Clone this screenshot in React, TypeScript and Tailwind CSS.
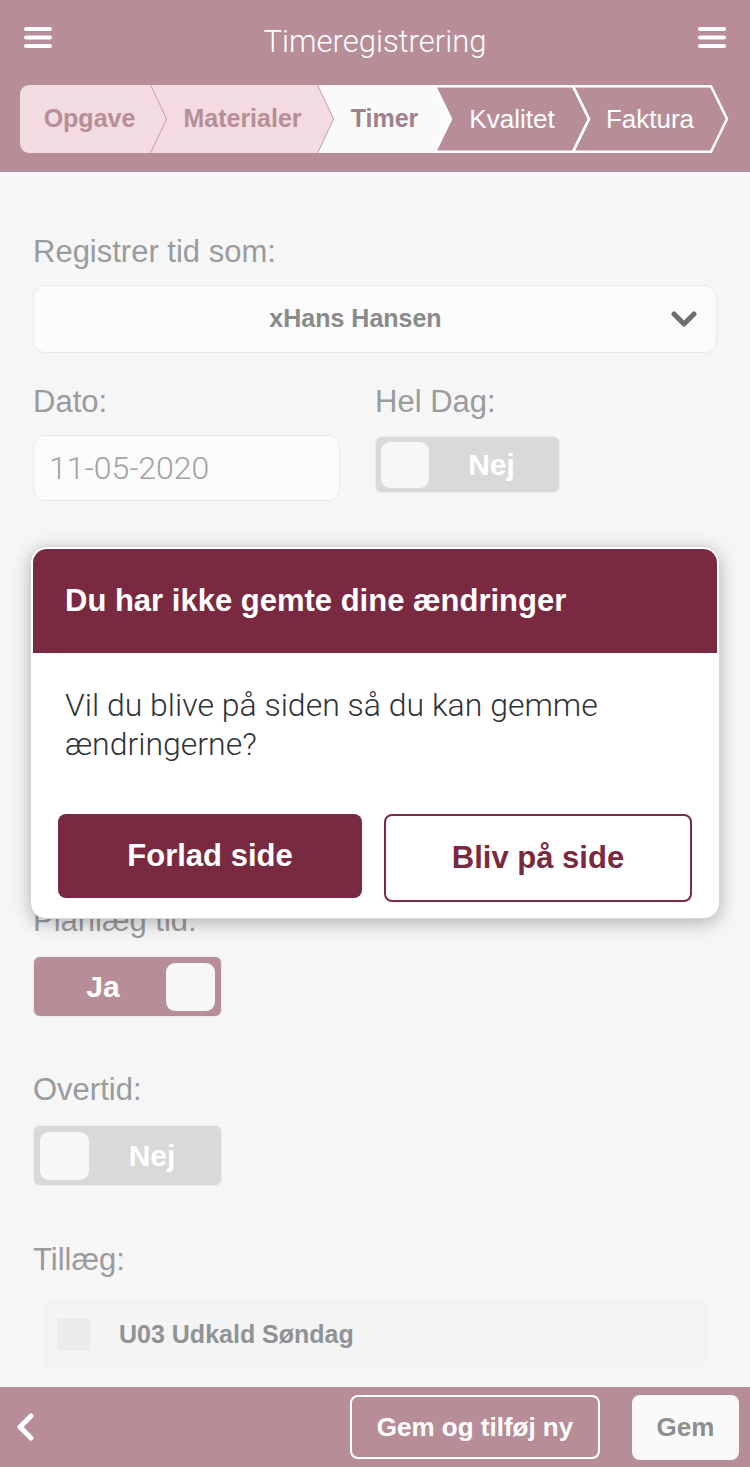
import React from "react";

type Crumb = {
  label: string;
  w: number;
  kind: "done" | "active" | "todo";
  first?: boolean;
};

const crumbs: Crumb[] = [
  { label: "Opgave", w: 131, kind: "done", first: true },
  { label: "Materialer", w: 167, kind: "done" },
  { label: "Timer", w: 117, kind: "active" },
  { label: "Kvalitet", w: 138, kind: "todo" },
  { label: "Faktura", w: 138, kind: "todo" },
];

const TIP = 16;
const H = 68;

const Burger = () => (
  <svg width="28" height="21" viewBox="0 0 28 21">
    <rect x="0" y="0" width="28" height="4" rx="2" fill="#fff" />
    <rect x="0" y="8.5" width="28" height="4" rx="2" fill="#fff" />
    <rect x="0" y="17" width="28" height="4" rx="2" fill="#fff" />
  </svg>
);

const CrumbShape = ({ c }: { c: Crumb }) => {
  const w = c.w;
  const mid = H / 2;
  if (c.kind === "todo") {
    const d = `M0 1.25 H${w} L${w + TIP} ${mid} L${w} ${H - 1.25} H0 L${TIP} ${mid} Z`;
    return (
      <svg
        width={w + TIP + 2}
        height={H}
        className="absolute left-0 top-0 overflow-visible"
      >
        <path d={d} fill="none" stroke="#fff" strokeWidth="2.5" strokeLinejoin="miter" />
      </svg>
    );
  }
  const d = c.first
    ? `M9 0 H${w} L${w + TIP} ${mid} L${w} ${H} H9 A9 9 0 0 1 0 ${H - 9} V9 A9 9 0 0 1 9 0 Z`
    : `M0 0 H${w} L${w + TIP} ${mid} L${w} ${H} H0 L${TIP} ${mid} Z`;
  return (
    <svg
      width={w + TIP + 2}
      height={H}
      className="absolute left-0 top-0 overflow-visible"
    >
      <path d={d} fill={c.kind === "done" ? "#f2dce1" : "#fafafa"} />
      <polyline
        points={`${w},0 ${w + TIP},${mid} ${w},${H}`}
        fill="none"
        stroke={c.kind === "done" ? "#b78e98" : "#d9cfd2"}
        strokeWidth="1.5"
      />
    </svg>
  );
};

const Breadcrumb = () => (
  <div className="flex ml-[20px] h-[68px]">
    {crumbs.map((c) => (
      <div
        key={c.label}
        className="relative h-[68px] flex items-center justify-center"
        style={{ width: c.w, paddingLeft: c.first ? 8 : TIP }}
      >
        <CrumbShape c={c} />
        <span
          className={
            c.kind === "done"
              ? "relative text-[25px] font-bold text-[#b78e98]"
              : c.kind === "active"
              ? "relative text-[25px] font-bold text-[#a0808a]"
              : "relative text-[26px] text-white"
          }
        >
          {c.label}
        </span>
      </div>
    ))}
  </div>
);

const Toggle = ({
  on,
  big,
}: {
  on: boolean;
  big?: boolean;
}) => {
  const knob = (
    <div
      className={
        big
          ? "w-[49px] h-[48px] rounded-[9px] bg-[#f7f7f7]"
          : "w-[48px] h-[46px] rounded-[9px] bg-[#f7f7f7]"
      }
    />
  );
  const text = (
    <div className="flex-1 text-center text-[30px] font-bold text-white leading-none">
      {on ? "Ja" : "Nej"}
    </div>
  );
  return (
    <div
      className={`flex items-center rounded-[7px] border border-[#ececec] ${
        big ? "w-[189px] h-[61px] p-[6px]" : "w-[185px] h-[57px] p-[5px]"
      } ${on ? "bg-[#b78e98]" : "bg-[#d9d9d9]"}`}
    >
      {on ? (
        <>
          {text}
          {knob}
        </>
      ) : (
        <>
          {knob}
          {text}
        </>
      )}
    </div>
  );
};

const Label = ({ children, className = "" }: { children: React.ReactNode; className?: string }) => (
  <div className={`text-[31px] leading-[36px] text-[#9a9b9e] ${className}`}>{children}</div>
);

export default function App() {
  return (
    <div className="relative w-[750px] h-[1467px] overflow-hidden bg-[#f6f6f6] flex flex-col font-['Liberation_Sans',Arial,sans-serif]">
      {/* Header */}
      <div className="bg-[#b78e98] h-[172px] shrink-0">
        <div className="h-[85px] px-[24px] flex items-center justify-between">
          <div className="-mt-[10px]">
            <Burger />
          </div>
          <div className="text-white text-[31px] font-light font-['Roboto',sans-serif]">
            Timeregistrering
          </div>
          <div className="-mt-[10px]">
            <Burger />
          </div>
        </div>
        <Breadcrumb />
      </div>

      {/* Form */}
      <div className="flex-1 px-[33px] pt-[62px] overflow-hidden">
        <Label>Registrer tid som:</Label>
        <div className="mt-[15px] h-[68px] rounded-[12px] bg-[#fbfbfb] border-[1.5px] border-[#e9e9e9] flex items-center pl-[20px] pr-[19px]">
          <div className="flex-1 text-center text-[25px] font-bold text-[#8a8a8a] pr-[14px]">
            xHans Hansen
          </div>
          <svg width="26" height="17" viewBox="0 0 26 17">
            <path
              d="M3 3 L13 13 L23 3"
              fill="none"
              stroke="#6f6f6f"
              strokeWidth="5"
              strokeLinecap="round"
              strokeLinejoin="round"
            />
          </svg>
        </div>

        <div className="grid grid-cols-2 mt-[31px]">
          <div>
            <Label>Dato:</Label>
            <div className="mt-[15px] w-[307px] h-[66px] rounded-[12px] bg-[#fbfbfb] border-[1.5px] border-[#e9e9e9] flex items-center pl-[15px] text-[32px] font-light font-['Roboto',sans-serif] text-[#a2a2a2]">
              11-05-2020
            </div>
          </div>
          <div>
            <Label>Hel Dag:</Label>
            <div className="mt-[16px]">
              <Toggle on={false} />
            </div>
          </div>
        </div>

        {/* rows behind the dialog */}
        <div className="h-[402px]" />

        <Label>Planlæg tid:</Label>
        <div className="mt-[17px]">
          <Toggle on big />
        </div>

        <Label className="mt-[55px]">Overtid:</Label>
        <div className="mt-[17px]">
          <Toggle on={false} big />
        </div>

        <Label className="mt-[56px]">Tillæg:</Label>
        <div className="mt-[22px] ml-[10px] w-[664px] h-[70px] rounded-[6px] bg-[#f4f4f4] flex items-center pl-[14px] gap-[29px]">
          <div className="w-[33px] h-[32px] rounded-[3px] bg-[#ebebeb]" />
          <div className="text-[25px] font-bold text-[#8f9297]">U03 Udkald Søndag</div>
        </div>
      </div>

      {/* Footer */}
      <div className="h-[80px] shrink-0 bg-[#b78e98] flex items-center pl-[16px] pr-[11px]">
        <svg width="19" height="28" viewBox="0 0 19 28">
          <path
            d="M15 3 L4 14 L15 25"
            fill="none"
            stroke="#fff"
            strokeWidth="5"
            strokeLinecap="round"
            strokeLinejoin="round"
          />
        </svg>
        <div className="flex-1" />
        <button className="w-[250px] h-[64px] rounded-[8px] border-2 border-white text-white text-[26px] font-bold">
          Gem og tilføj ny
        </button>
        <button className="ml-[32px] w-[107px] h-[65px] rounded-[8px] bg-[#fafafa] text-[#8e8e8e] text-[26px] font-bold">
          Gem
        </button>
      </div>

      {/* Unsaved changes dialog */}
      <div className="absolute left-[30px] top-[546px] w-[690px] bg-white rounded-[16px] border border-[#d6d6d6] p-[2px] shadow-[0_4px_18px_rgba(0,0,0,0.28)]">
        <div className="h-[104px] rounded-t-[14px] bg-[#7a2a40] flex items-center px-[32px]">
          <h2 className="text-white text-[31px] leading-[36px] font-bold">
            Du har ikke gemte dine ændringer
          </h2>
        </div>
        <p className="px-[32px] pt-[33px] text-[32px] leading-[39px] font-light font-['Roboto',sans-serif] text-[#2e3338]">
          Vil du blive på siden så du kan gemme ændringerne?
        </p>
        <div className="mt-[50px] px-[25px] pb-[14px] flex items-start gap-[22px]">
          <button className="flex-1 h-[84px] rounded-[8px] bg-[#7a2a40] text-white text-[31px] font-bold">
            Forlad side
          </button>
          <button className="flex-1 h-[88px] rounded-[8px] border-2 border-[#7a2a40] bg-white text-[#7a2a40] text-[31px] font-bold">
            Bliv på side
          </button>
        </div>
      </div>
    </div>
  );
}
